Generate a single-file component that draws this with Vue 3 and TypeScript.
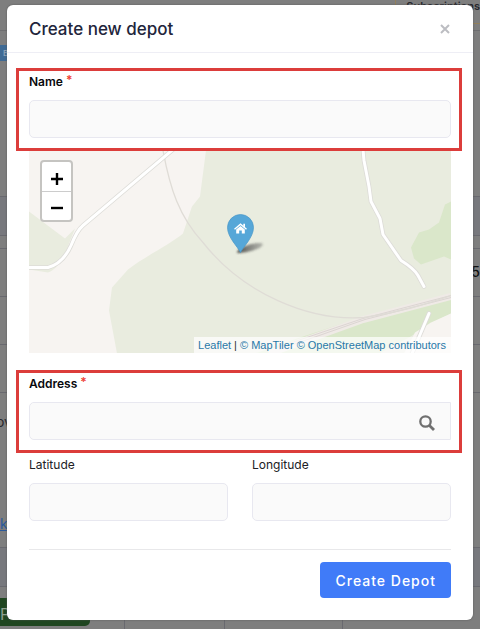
<script setup lang="ts">
import { ref } from 'vue'

const name = ref('')
const address = ref('')
const latitude = ref('')
const longitude = ref('')
</script>

<template>
  <div class="screen">
    <div class="page-behind" aria-hidden="true">
      <div class="top-strip"><span class="plan-tab">Subscriptions</span></div>
      <div class="toolbar"><span class="badge">B</span></div>
      <div class="table-head"></div>
      <div class="spacer"></div>
      <div class="line-row end">65</div>
      <div class="line-row"></div>
      <div class="line-row"></div>
      <div class="text-row"><span>ov</span><span class="link">ck</span></div>
      <div class="table-head"></div>
      <div class="cells">
        <div class="cell"><span class="pill">P</span></div>
        <div class="cell"></div>
        <div class="cell"></div>
        <div class="cell"></div>
      </div>
    </div>

    <main class="modal" role="dialog" aria-labelledby="modal-title">
      <header class="modal-header">
        <h1 id="modal-title">Create new depot</h1>
        <button class="close" type="button" aria-label="Close">
          <svg viewBox="0 0 10 10" width="10" height="10">
            <path d="M1 1 9 9M9 1 1 9" fill="none" stroke="#bcbdc2" stroke-width="2" />
          </svg>
        </button>
      </header>

      <form class="modal-body" @submit.prevent>
        <section class="highlight">
          <label class="strong" for="name">Name <span class="required">*</span></label>
          <input id="name" v-model="name" type="text" />
        </section>

        <div class="map">
          <svg class="tiles" viewBox="0 0 422 203" preserveAspectRatio="xMidYMid slice">
            <rect width="422" height="203" fill="#f7f4f1" />
            <path d="M0 61 36 88 46 78 38 98C32 112 27 119 19 122L0 119Z" fill="#e9ecdf" />
            <path d="M177 0 171 46 163 56 154 83C141 94 114 107 99 119L83 137 80 160 88 203H422V0Z" fill="#e9ecdf" />
            <path d="M422 51 416 54 410 72 400 79 390 82 382 97 385 108 392 114 415 106 422 109Z" fill="#dae7ca" />
            <path d="M268 188 335 166 422 144V163L402 173 380 187 350 203H226Z" fill="#dae7ca" />
            <path d="M422 163 402 172 386 182 375 203H422Z" fill="#f7f4f1" />
            <path d="M240 203 334 169 422 146" fill="none" stroke="#efeae6" stroke-width="7" />
            <path d="M248 197 334 168 422 145M250 199 336 169 422 147" fill="none" stroke="#dcd5d3" stroke-width="1" />
            <path d="M134 0C141 38 150 66 174 92C214 143 280 171 335 167C370 162 395 154 422 145" fill="none" stroke="#dfdcd6" stroke-width="1.3" />
            <g fill="none" stroke-linecap="round" stroke-linejoin="round">
              <g stroke="#dddcd8" stroke-width="4.6">
                <path d="M0 117H19Q34 113 42 95Q48 80 54 75L144 -1" />
                <path d="M334 -1 335 10 340 36 342 51 351 68 354 84 372 110Q385 118 389 125L395 136" />
                <path d="M400 163 383 203" />
              </g>
              <g stroke="#ffffff" stroke-width="3">
                <path d="M0 117H19Q34 113 42 95Q48 80 54 75L144 -1" />
                <path d="M334 -1 335 10 340 36 342 51 351 68 354 84 372 110Q385 118 389 125L395 136" />
                <path d="M400 163 383 203" />
              </g>
            </g>
          </svg>
          <div class="zoom-control">
            <button type="button" aria-label="Zoom in">
              <svg viewBox="0 0 14 14" width="14" height="14"><path d="M7 1V13M1 7H13" stroke="#000" stroke-width="2.4" /></svg>
            </button>
            <button type="button" aria-label="Zoom out">
              <svg viewBox="0 0 14 14" width="14" height="14"><path d="M1 7H13" stroke="#000" stroke-width="2.4" /></svg>
            </button>
          </div>
          <svg class="marker" viewBox="0 0 44 44" width="44" height="44">
            <defs>
              <filter id="soft" x="-30%" y="-60%" width="160%" height="220%"><feGaussianBlur stdDeviation="1.3" /></filter>
              <linearGradient id="shade" x1="0" x2="1"><stop offset="0" stop-color="#333" stop-opacity=".85" /><stop offset="1" stop-color="#555" stop-opacity=".35" /></linearGradient>
            </defs>
            <path d="M11 40C12 34 26 30 34 30C39 30 37 34 31 36C24 39 16 40 11 40Z" fill="url(#shade)" filter="url(#soft)" />
            <path d="M14.500 39.500C12 34 1.500 24.500 1.500 14.500A13 13 0 0 1 27.500 14.500C27.500 24.500 17 34 14.500 39.500Z" fill="#56a7d8" stroke="#4997c7" stroke-width=".7" />
            <path d="M8.500 16.200 14.500 11.200 20.500 16.200" fill="none" stroke="#fff" stroke-width="1.4" />
            <path d="M17.300 10.700H19V14.500L17.300 13ZM10.200 16.600 14.500 13 18.800 16.600V20.500H15.800V17.500H13.200V20.500H10.200Z" fill="#fff" />
          </svg>
          <div class="attribution">
            <a href="#leaflet">Leaflet</a> | <a href="#maptiler">© MapTiler</a> <a href="#osm">© OpenStreetMap contributors</a>
          </div>
        </div>

        <section class="highlight">
          <label class="strong" for="address">Address <span class="required">*</span></label>
          <div class="search">
            <input id="address" v-model="address" type="text" />
            <button type="button" aria-label="Search address">
              <svg viewBox="0 0 16 16" width="16" height="16">
                <circle cx="6.500" cy="6.500" r="5.200" fill="none" stroke="#707070" stroke-width="2.300" />
                <path d="M10.200 10.200 15 15" stroke="#707070" stroke-width="2.800" />
              </svg>
            </button>
          </div>
        </section>

        <div class="coordinates">
          <div>
            <label for="latitude">Latitude</label>
            <input id="latitude" v-model="latitude" type="text" />
          </div>
          <div>
            <label for="longitude">Longitude</label>
            <input id="longitude" v-model="longitude" type="text" />
          </div>
        </div>

        <footer class="actions">
          <button class="submit" type="submit">Create Depot</button>
        </footer>
      </form>
    </main>
  </div>
</template>

<style>
body {
  margin: 0;
  background: #7e7e7e;
}
</style>

<style scoped>
* {
  box-sizing: border-box;
}

.screen {
  position: relative;
  min-height: 100vh;
  padding: 5px 7px 9px;
  overflow: hidden;
  font-family: Inter, "Liberation Sans", sans-serif;
}

.page-behind {
  position: absolute;
  inset: 0;
  background: #7e7e7e;
  color: #26262c;
  font-size: 14px;
}

.top-strip {
  display: flex;
  justify-content: flex-end;
  height: 31px;
  border-bottom: 1px solid #6e6e70;
}

.plan-tab {
  height: 24px;
  padding-left: 10px;
  border-left: 1px solid #93805b;
  border-bottom: 1px solid #93805b;
  font-size: 11px;
  font-weight: 600;
  line-height: 12px;
}

.toolbar {
  height: 165px;
  padding-top: 14px;
}

.badge {
  display: block;
  width: 40px;
  height: 16px;
  padding-left: 3px;
  background: #3f6a94;
  color: #8fa3b8;
  font-size: 8px;
  font-weight: 600;
  line-height: 16px;
}

.table-head {
  height: 40px;
  border: solid #69696f;
  border-width: 1px 0;
  background: #77787d;
}

.spacer {
  height: 12px;
}

.line-row {
  height: 48px;
  border-top: 1px solid #69696f;
  line-height: 46px;
}

.end {
  color: #111;
  font-weight: 500;
  text-align: right;
}

.text-row {
  display: flex;
  flex-direction: column;
  gap: 84px;
  height: 155px;
  padding-top: 20px;
  border-top: 1px solid #69696f;
  line-height: 18px;
}

.text-row span {
  width: 16px;
  margin-left: -4px;
}

.text-row .link {
  margin-left: -8px;
  color: #2a5a9c;
  text-decoration: underline;
}

.cells {
  display: grid;
  grid-template-columns: 125fr 100fr 118fr 137fr;
  height: 42px;
}

.cell {
  border-right: 1px solid #69696f;
}

.cell:last-child {
  border-right: 0;
}

.pill {
  display: block;
  width: 90px;
  height: 28px;
  margin-top: 11px;
  border-radius: 0 5px 5px 0;
  background: #1f4620;
  color: #8fa08f;
  font-size: 16px;
  line-height: 32px;
}

.modal {
  position: relative;
  padding-bottom: 22px;
  border-radius: 6px;
  background: #fff;
  box-shadow: 0 0 2px #555;
}

.modal-header {
  display: flex;
  align-items: center;
  justify-content: space-between;
  height: 48px;
  padding: 0 22px;
  border-bottom: 1px solid #eeeef5;
}

h1 {
  margin: 0;
  color: #22253b;
  font-size: 17px;
  font-weight: 500;
  line-height: 24px;
}

button {
  display: flex;
  align-items: center;
  justify-content: center;
  padding: 0;
  border: 0;
  background: none;
  font-family: inherit;
}

.close {
  width: 12px;
  height: 24px;
}

.modal-body {
  padding: 15px 11px 0 9px;
}

.highlight {
  padding: 1px 8px 10px 10px;
  border: 3px solid #dc3d3b;
}

label {
  display: block;
  margin-bottom: 8px;
  color: #202024;
  font-size: 12px;
  font-weight: 400;
  line-height: 20px;
}

.strong {
  color: #08080c;
  font-weight: 600;
}

.required {
  color: #ee4035;
  line-height: 12px;
  vertical-align: 2px;
}

input {
  display: block;
  width: 100%;
  height: 38px;
  padding: 0 10px;
  border: 1px solid #e8e8f0;
  border-radius: 5px;
  outline: 0;
  background: #fafafa;
  font-family: inherit;
  font-size: 13px;
}

.map {
  position: relative;
  height: 202px;
  margin: 0 11px 17px 13px;
  overflow: hidden;
}

.tiles {
  display: block;
  width: 100%;
  height: 100%;
}

.zoom-control {
  position: absolute;
  top: 9px;
  left: 11px;
  width: 33px;
  border: 2px solid #c5c4c1;
  border-radius: 4px;
  background: #fff;
}

.zoom-control button {
  width: 100%;
  height: 29px;
  padding-top: 4px;
}

.zoom-control button + button {
  border-top: 1px solid #ccc;
}

.marker {
  position: absolute;
  top: 62px;
  left: calc(50% - 14px);
}

.attribution {
  position: absolute;
  right: 0;
  bottom: 0;
  padding: 0 5px 0 4px;
  background: rgba(255, 255, 255, 0.7);
  color: #333;
  font-family: "Liberation Sans", sans-serif;
  font-size: 11px;
  line-height: 16px;
  white-space: nowrap;
}

.attribution a {
  color: #2878a8;
  text-decoration: none;
}

.search {
  display: flex;
  height: 38px;
  border: 1px solid #e8e8f0;
  border-radius: 5px 0 0 5px;
  background: #fafafa;
}

.search input {
  flex: 1;
  min-width: 0;
  height: 36px;
  border: 0;
}

.search button {
  width: 46px;
  padding-top: 4px;
}

.coordinates {
  display: grid;
  grid-template-columns: 1fr 1fr;
  gap: 24px;
  margin: 2px 11px 28px 13px;
}

.actions {
  display: flex;
  justify-content: flex-end;
  margin: 0 11px 0 13px;
  padding-top: 12px;
  border-top: 1px solid #e8e8ea;
}

.submit {
  height: 36px;
  padding: 0 15px;
  border-radius: 4px;
  background: #407bf8;
  color: #fff;
  font-size: 14px;
  font-weight: 500;
  letter-spacing: 1px;
}
</style>
